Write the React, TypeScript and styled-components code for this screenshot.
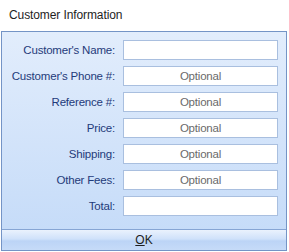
import React from 'react';
import styled, { createGlobalStyle } from 'styled-components';

const GlobalStyle = createGlobalStyle`
  html, body {
    margin: 0;
    padding: 0;
    background: #ffffff;
    font-family: "Liberation Sans", Arial, sans-serif;
    font-size: 12px;
  }
`;

const fields = [
  { label: "Customer's Name:", optional: false },
  { label: "Customer's Phone #:", optional: true },
  { label: 'Reference #:', optional: true },
  { label: 'Price:', optional: true },
  { label: 'Shipping:', optional: true },
  { label: 'Other Fees:', optional: true },
  { label: 'Total:', optional: false },
];

export default function App() {
  return (
    <Dialog>
      <GlobalStyle />
      <Title>Customer Information</Title>
      <Panel>
        <Form>
          {fields.map((f) => (
            <React.Fragment key={f.label}>
              <Label>{f.label}</Label>
              <Field placeholder={f.optional ? 'Optional' : ''} />
            </React.Fragment>
          ))}
        </Form>
        <OkButton>
          <u>O</u>K
        </OkButton>
      </Panel>
    </Dialog>
  );
}

const Dialog = styled.div`
  width: 289px;
  height: 252px;
  display: flex;
  flex-direction: column;
  background: #ffffff;
`;

const Title = styled.div`
  height: 31px;
  display: flex;
  align-items: center;
  padding-left: 9px;
  padding-bottom: 1px;
  box-sizing: border-box;
  color: #1e1e1e;
  font-size: 12px;
  letter-spacing: -0.1px;
`;

const Panel = styled.div`
  width: 286px;
  height: 220px;
  margin-left: 1px;
  box-sizing: border-box;
  border: 1px solid #7494c6;
  background: linear-gradient(#e2edfc, #c3daf8);
  display: flex;
  flex-direction: column;
`;

const Form = styled.div`
  flex: 1;
  display: grid;
  grid-template-columns: 1fr 155px;
  grid-auto-rows: 20px;
  column-gap: 8px;
  row-gap: 6px;
  padding: 8px 8px 0 0;
`;

const Label = styled.div`
  display: flex;
  align-items: center;
  justify-content: flex-end;
  color: #1f3b7a;
  font-size: 11.5px;
  letter-spacing: -0.2px;
  white-space: nowrap;
`;

const Field = styled.input`
  box-sizing: border-box;
  width: 155px;
  height: 20px;
  margin: 0;
  border: 1px solid #a9bfdf;
  background: #ffffff;
  font-family: "Liberation Sans", Arial, sans-serif;
  font-size: 11.5px;
  letter-spacing: -0.2px;
  text-align: center;
  outline: none;

  &::placeholder {
    color: #6a6a6a;
    opacity: 1;
  }
`;

const OkButton = styled.button`
  height: 21px;
  margin: 0;
  padding: 0;
  border: none;
  border-top: 1px solid #86a5d4;
  background: linear-gradient(#eaf2fd, #cfe1fa 45%, #bcd4f6 55%, #c6dbf8);
  color: #1e1e1e;
  font-family: "Liberation Sans", Arial, sans-serif;
  font-size: 12px;
  cursor: pointer;
`;
